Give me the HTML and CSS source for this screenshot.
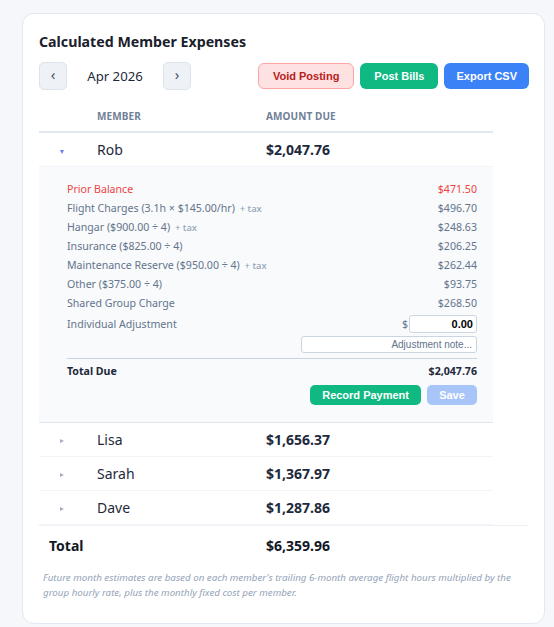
FILE: index.html
```html
<!DOCTYPE html>
<html>
<head>
<meta charset="utf-8">
<link rel="stylesheet" href="styles.css">
</head>
<body>
<div class="card">
  <h2 class="title">Calculated Member Expenses</h2>
  <div class="toolbar">
    <div class="month-nav">
      <button class="nav-btn">&#8249;</button>
      <span class="month">Apr 2026</span>
      <button class="nav-btn">&#8250;</button>
    </div>
    <div class="actions">
      <button class="btn btn-void">Void Posting</button>
      <button class="btn btn-post">Post Bills</button>
      <button class="btn btn-export">Export CSV</button>
    </div>
  </div>
  <table class="members">
    <thead>
      <tr><th class="c-tog"></th><th class="c-name">Member</th><th class="c-amt">Amount Due</th></tr>
    </thead>
    <tbody>
      <tr class="row open">
        <td class="c-tog"><span class="tri down"></span></td>
        <td class="c-name">Rob</td>
        <td class="c-amt">$2,047.76</td>
      </tr>
      <tr class="detail">
        <td colspan="3">
          <div class="detail-box">
            <div class="line red"><span>Prior Balance</span><span>$471.50</span></div>
            <div class="line"><span>Flight Charges (3.1h × $145.00/hr) <small>+ tax</small></span><span>$496.70</span></div>
            <div class="line"><span>Hangar ($900.00 ÷ 4) <small>+ tax</small></span><span>$248.63</span></div>
            <div class="line"><span>Insurance ($825.00 ÷ 4)</span><span>$206.25</span></div>
            <div class="line"><span>Maintenance Reserve ($950.00 ÷ 4) <small>+ tax</small></span><span>$262.44</span></div>
            <div class="line"><span>Other ($375.00 ÷ 4)</span><span>$93.75</span></div>
            <div class="line"><span>Shared Group Charge</span><span>$268.50</span></div>
            <div class="line adj"><span>Individual Adjustment</span><span class="adj-in"><span class="dollar">$</span><input class="amt-input" value="0.00"></span></div>
            <div class="note-wrap"><input class="note-input" placeholder="Adjustment note..."></div>
            <div class="line total-due"><span>Total Due</span><span>$2,047.76</span></div>
            <div class="detail-actions">
              <button class="btn-sm btn-record">Record Payment</button>
              <button class="btn-sm btn-save">Save</button>
            </div>
          </div>
        </td>
      </tr>
      <tr class="row">
        <td class="c-tog"><span class="tri right"></span></td>
        <td class="c-name">Lisa</td>
        <td class="c-amt">$1,656.37</td>
      </tr>
      <tr class="row">
        <td class="c-tog"><span class="tri right"></span></td>
        <td class="c-name">Sarah</td>
        <td class="c-amt">$1,367.97</td>
      </tr>
      <tr class="row">
        <td class="c-tog"><span class="tri right"></span></td>
        <td class="c-name">Dave</td>
        <td class="c-amt">$1,287.86</td>
      </tr>
    </tbody>
  </table>
  <div class="grand-total">
    <span class="gt-label">Total</span>
    <span class="gt-amt">$6,359.96</span>
  </div>
  <p class="footnote">Future month estimates are based on each member's trailing 6-month average flight hours multiplied by the group hourly rate, plus the monthly fixed cost per member.</p>
</div>
</body>
</html>
```
FILE: styles.css
```css
* { box-sizing: border-box; }
html, body { margin: 0; padding: 0; }
body {
  background: #f5f7fb;
  font-family: "Noto Sans", "Open Sans", sans-serif;
  color: #1e293b;
  width: 554px;
  height: 627px;
  overflow: hidden;
}
.card {
  margin: 13px 0 0 22px;
  width: 523px;
  height: 611px;
  background: #fff;
  border: 1px solid #e2e8f0;
  border-radius: 12px;
  padding: 17px 15px 0 16px;
}
.title {
  margin: 0;
  font-size: 14.2px;
  line-height: 22px;
  font-weight: 700;
  color: #1a202c;
}
.toolbar {
  margin-top: 9px;
  display: flex;
  justify-content: space-between;
  align-items: center;
  height: 28px;
}
.month-nav { display: flex; align-items: center; }
.nav-btn {
  width: 28px;
  height: 28px;
  border: 1px solid #dde3ea;
  background: #eef2f7;
  border-radius: 5px;
  color: #4a5568;
  font-size: 15px;
  line-height: 1;
  padding: 0 0 3px;
  font-family: "Noto Sans", sans-serif;
}
.month {
  width: 96px;
  text-align: center;
  font-size: 13.2px;
  color: #1e293b;
}
.actions { display: flex; gap: 6px; }
.btn {
  height: 26px;
  border-radius: 6px;
  font-family: "Liberation Sans", Arial, sans-serif;
  font-weight: 700;
  font-size: 11px;
  padding: 0 13px;
  border: 1px solid transparent;
  color: #fff;
}
.btn-void { background: #fee2e2; border-color: #fca5a5; color: #b91c1c; padding: 0 14px; }
.btn-post { background: #10b981; padding: 0 13px; }
.btn-export { background: #3b82f6; padding: 0 11px; }

.members {
  margin-top: 10px;
  width: 454px;
  border-collapse: collapse;
}
.members th {
  height: 32px;
  text-align: left;
  font-size: 10px;
  font-weight: 700;
  text-transform: uppercase;
  color: #718096;
  border-bottom: 2px solid #e2e8f0;
  padding: 0;
  letter-spacing: 0.1px;
}
.c-tog { width: 58px; text-align: left; padding: 0 0 0 21px !important; }
.c-name { width: 169px; }
.members td { padding: 0; }
.row td {
  height: 34px;
  font-size: 14px;
  color: #1e293b;
  border-bottom: 1px solid #f1f5f9;
}
.row .c-amt { font-weight: 700; }
.tri { display: inline-block; width: 0; height: 0; vertical-align: middle; }
.tri.down {
  border-left: 2px solid transparent;
  border-right: 2px solid transparent;
  border-top: 4px solid #6b7cf6;
  margin-top: 2px;
}
.tri.right {
  border-top: 2px solid transparent;
  border-bottom: 2px solid transparent;
  border-left: 4px solid #a3aec2;
}
.detail td {
  background: #f8fafc;
  border-bottom: 1px solid #e2e8f0;
}
.detail-box { padding: 13px 16px 17px 28px; }
.line {
  display: flex;
  justify-content: space-between;
  align-items: center;
  height: 19px;
  font-size: 10.6px;
  color: #64748b;
}
.line small { font-size: 9.5px; color: #94a3b8; margin-left: 2px; font-weight: 500; }
.line.red { color: #ef4444; }
.line.adj { height: 22px; margin-top: 0; }
.adj-in { display: flex; align-items: center; }
.dollar { margin-right: 1px; }
.amt-input {
  width: 68px;
  height: 18px;
  border: 1px solid #cbd5e1;
  border-radius: 3px;
  font-family: "Liberation Sans", Arial, sans-serif;
  font-size: 11px;
  font-weight: 700;
  text-align: right;
  padding: 0 3px;
  color: #000;
  background: #fff;
}
.note-wrap { display: flex; justify-content: flex-end; margin-top: 1px; }
.note-input {
  width: 176px;
  height: 17px;
  border: 1px solid #cbd5e1;
  border-radius: 3px;
  font-family: "Liberation Sans", Arial, sans-serif;
  font-size: 10px;
  text-align: right;
  padding: 0 4px;
  background: #fff;
}
.note-input::placeholder { color: #64748b; }
.line.total-due {
  margin-top: 5px;
  border-top: 1px solid #cbd5e1;
  height: 26px;
  padding-top: 0;
  font-weight: 700;
  color: #1e293b;
}
.detail-actions {
  display: flex;
  justify-content: flex-end;
  gap: 6px;
  margin-top: 1px;
}
.btn-sm {
  height: 20px;
  border: none;
  border-radius: 5px;
  color: #fff;
  font-family: "Liberation Sans", Arial, sans-serif;
  font-weight: 700;
  font-size: 11px;
  padding: 0 12px;
}
.btn-record { background: #10b981; }
.btn-save { background: #a8c5fa; width: 50px; padding: 0; }

.grand-total {
  width: 489px;
  height: 40px;
  border-top: 1px solid #eef2f6;
  display: flex;
  align-items: center;
  font-size: 14px;
  font-weight: 700;
  color: #111827;
}
.gt-label { width: 227px; padding-left: 10px; }
.footnote {
  margin: 5px 0 0 4px;
  width: 480px;
  font-size: 9.75px;
  font-style: italic;
  line-height: 15px;
  color: #94a3b8;
}
```
